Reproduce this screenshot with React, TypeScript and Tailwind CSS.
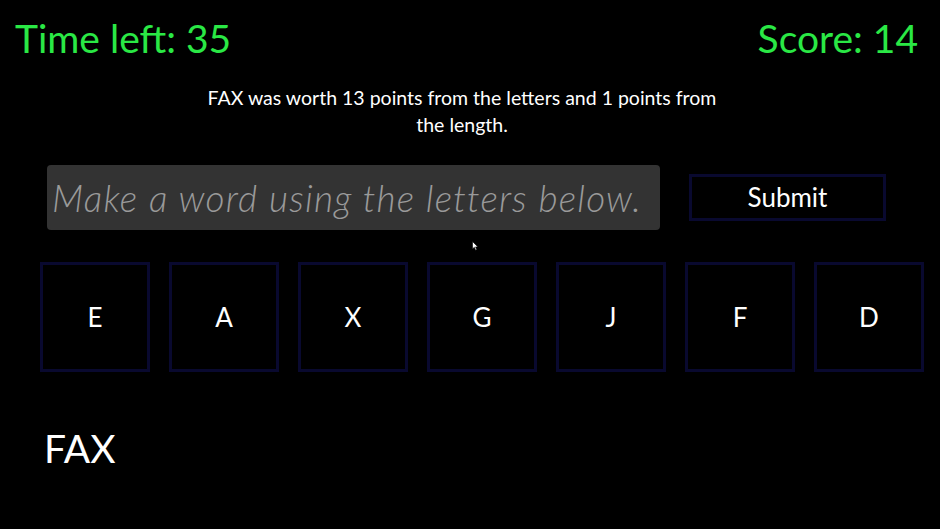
import React, { useState } from "react";

const letters = ["E", "A", "X", "G", "J", "F", "D"];

const App: React.FC = () => {
    const [word, setWord] = useState<string>("");

    return (
        <div className="relative min-h-screen w-full bg-black text-white font-['Lato','Noto_Sans',sans-serif] overflow-hidden">
            {/* header: timer and score */}
            <div className="flex justify-between items-start pl-[15px] pr-[22px] pt-[14px]">
                <div className="text-[39px] leading-[48px] text-[#2ae845]">Time left: 35</div>
                <div className="text-[39px] leading-[48px] text-[#2ae845]">Score: 14</div>
            </div>

            {/* last word message */}
            <div className="flex justify-center pr-[16px] mt-[22px]">
                <p className="w-[530px] text-center text-[19.5px] leading-[27px] text-white">
                    FAX was worth 13 points from the letters and 1 points from the length.
                </p>
            </div>

            {/* input row */}
            <div className="flex items-center gap-[29px] pl-[47px] mt-[27px]">
                <input
                    type="text"
                    value={word}
                    onChange={(e) => setWord(e.target.value)}
                    placeholder="Make a word using the letters below."
                    className="w-[613px] h-[65px] rounded-[4px] bg-[#333333] px-[5px] text-[37px] font-light italic tracking-[1.2px] text-white placeholder:text-[#9a9a9a] outline-none"
                />
                <button
                    type="button"
                    className="w-[197px] h-[47px] border-[3px] border-[#09092f] bg-black text-[26px] text-white"
                >
                    Submit
                </button>
            </div>

            {/* letter tiles */}
            <div className="flex gap-[19px] pl-[40px] mt-[32px]">
                {letters.map((l) => (
                    <button
                        key={l}
                        type="button"
                        onClick={() => setWord(word + l)}
                        className="w-[110px] h-[110px] flex items-center justify-center border-[3px] border-[#09092f] bg-black text-[26px] text-white"
                    >
                        {l}
                    </button>
                ))}
            </div>

            {/* words made so far */}
            <div className="pl-[44px] mt-[52px] text-[39px] leading-[48px] text-white">FAX</div>

            {/* mouse pointer */}
            <svg
                className="absolute left-[472px] top-[241px]"
                width="7"
                height="10"
                viewBox="0 0 7 10"
            >
                <path d="M0.5 0.5 L0.5 8 L2.3 6.3 L3.6 9.3 L4.8 8.8 L3.6 5.9 L6 5.9 Z" fill="#ffffff" stroke="#000000" strokeWidth="0.6" />
            </svg>
        </div>
    );
};

export default App;
